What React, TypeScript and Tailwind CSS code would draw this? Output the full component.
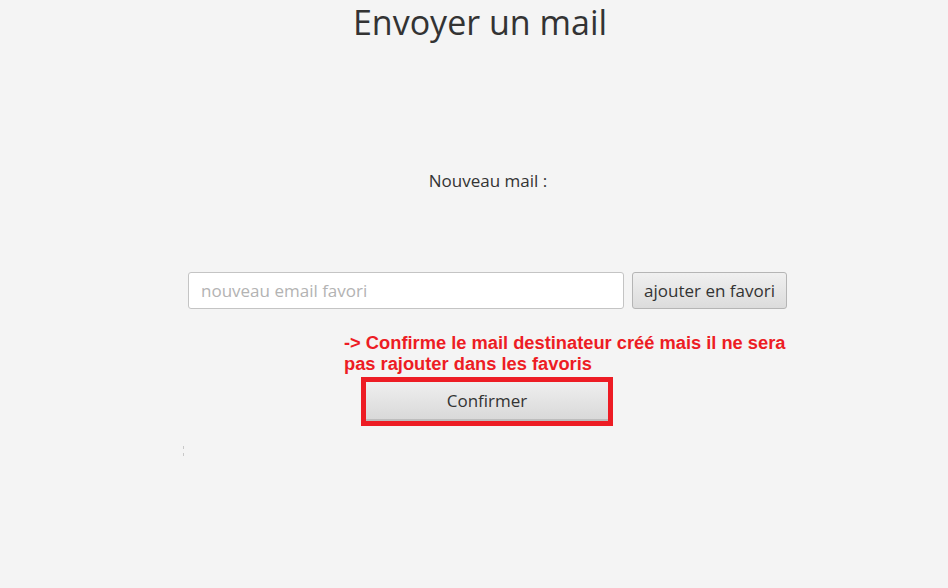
const ui = { fontFamily: '"Open Sans", "Noto Sans", sans-serif' };

const App = () => {
  return (
    <div className="min-h-[588px] w-full bg-[#f4f4f4] text-[#333333]" style={ui}>
      <div className="flex flex-col">
        <h1 className="pl-[12px] text-center text-[34px] leading-[44px] text-[#333333]">
          Envoyer un mail
        </h1>

        <div className="mt-[126px] pl-[28px] text-center text-[17px] leading-[22px]">
          Nouveau mail :
        </div>

        <div className="mt-[80px] flex gap-[8px] pl-[188px]">
          <input
            className="h-[37px] w-[436px] rounded-[3px] border border-[#c4c4c4] bg-white px-[12px] text-[17px] outline-none placeholder:text-[#b3b3b3]"
            placeholder="nouveau email favori"
          />
          <button className="h-[37px] w-[155px] rounded-[3px] border border-[#b5b5b5] bg-gradient-to-b from-[#f0f0f0] to-[#dcdcdc] text-[17px] text-[#333333]">
            ajouter en favori
          </button>
        </div>

        <p
          className="mt-[23px] box-content w-[450px] pl-[344px] text-[18.3px] font-bold leading-[21px] text-[#ed1c24]"
          style={{ fontFamily: '"Liberation Sans", Arial, sans-serif' }}
        >
          -&gt; Confirme le mail destinateur créé mais il ne sera pas rajouter dans les favoris
        </p>

        <div className="mt-[3px] pl-[361px]">
          <div className="w-[252px] border-[5px] border-[#ed1c24]">
            <button className="h-[39px] w-full border-b-2 border-[#bdbdbd] bg-gradient-to-b from-[#efefef] to-[#d9d9d9] text-[17px] text-[#333333]">
              Confirmer
            </button>
          </div>
        </div>

        <div className="mt-[20px] flex flex-col gap-[4px] pl-[183px]">
          <span className="h-[3px] w-[1px] bg-[#c8c8c8]" />
          <span className="h-[3px] w-[1px] bg-[#c8c8c8]" />
        </div>
      </div>
    </div>
  );
};

export default App;
